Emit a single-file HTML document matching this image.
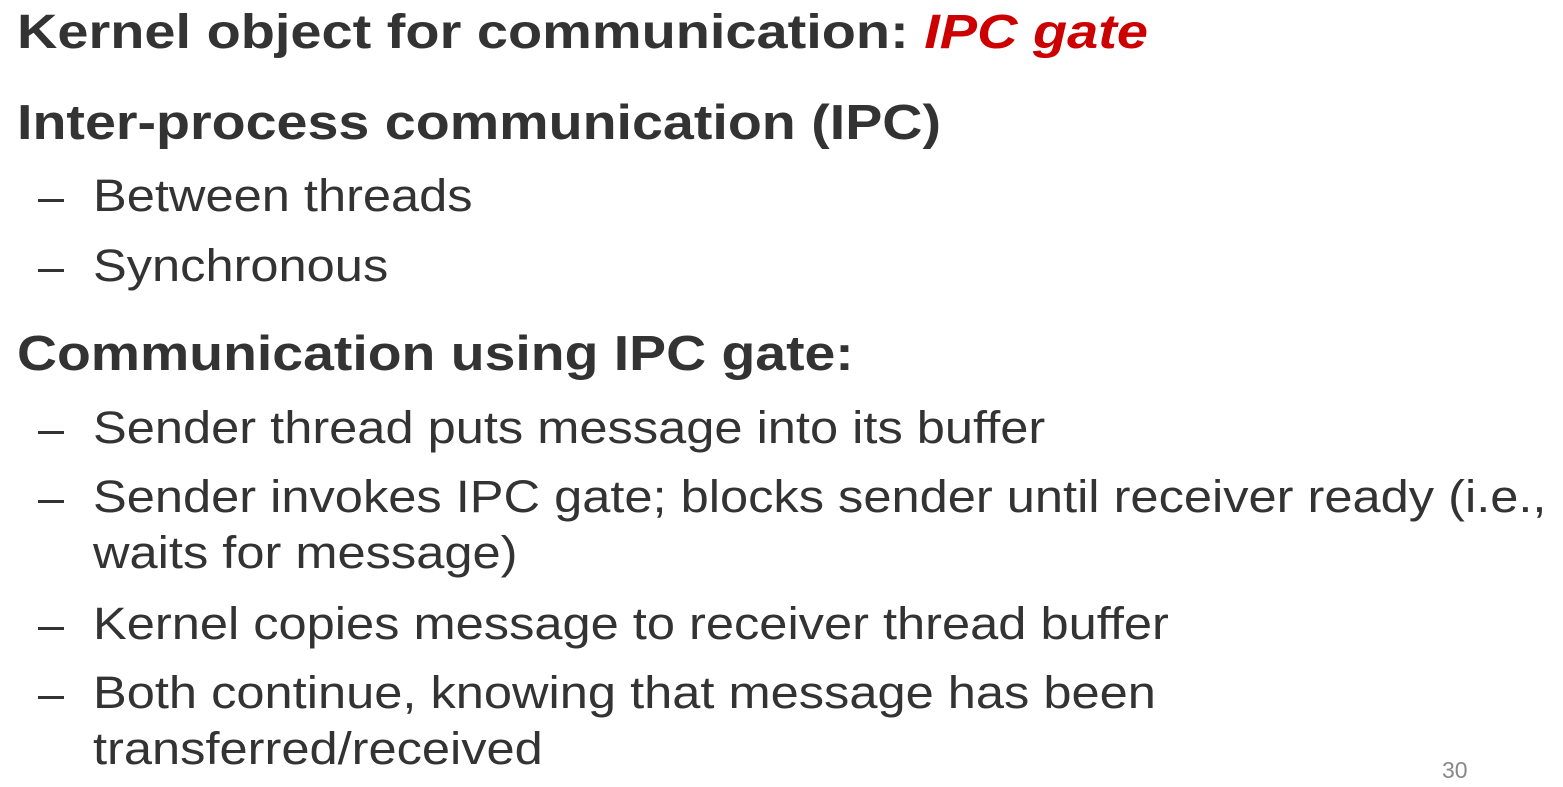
<!DOCTYPE html>
<html><head><meta charset="utf-8"><style>
html,body{margin:0;padding:0;background:#fff;}
body{width:1563px;height:787px;position:relative;overflow:hidden;font-family:"Liberation Sans",Arial,sans-serif;color:#333;}
.l{position:absolute;white-space:nowrap;line-height:1;transform-origin:0 50%;}
.h{font-weight:bold;font-size:49px;left:17px;}
.b{font-size:45px;left:93px;transform:scaleX(1.124);}
.d{position:absolute;left:38px;width:26px;height:3px;background:#333;}
.r{color:#c00;font-style:italic;}
</style></head><body>
<div class="l h" style="top:9px;font-size:48px;transform:scaleX(1.165);">Kernel object for communication: <span class="r">IPC gate</span></div>
<div class="l h" style="top:99px;transform:scaleX(1.135);">Inter-process communication (IPC)</div>
<div class="d" style="top:199px"></div><div class="l b" style="top:173px;">Between threads</div>
<div class="d" style="top:269px"></div><div class="l b" style="top:243px;">Synchronous</div>
<div class="l h" style="top:330px;transform:scaleX(1.13);">Communication using IPC gate:</div>
<div class="d" style="top:431px"></div><div class="l b" style="top:405px;">Sender thread puts message into its buffer</div>
<div class="d" style="top:500px"></div><div class="l b" style="top:474px;">Sender invokes IPC gate; blocks sender until receiver ready (i.e.,</div>
<div class="l b" style="top:530px;">waits for message)</div>
<div class="d" style="top:627px"></div><div class="l b" style="top:601px;">Kernel copies message to receiver thread buffer</div>
<div class="d" style="top:696px"></div><div class="l b" style="top:670px;">Both continue, knowing that message has been</div>
<div class="l b" style="top:726px;">transferred/received</div>
<div class="l" style="left:1442px;top:759px;font-size:23px;color:#888;">30</div>
</body></html>
